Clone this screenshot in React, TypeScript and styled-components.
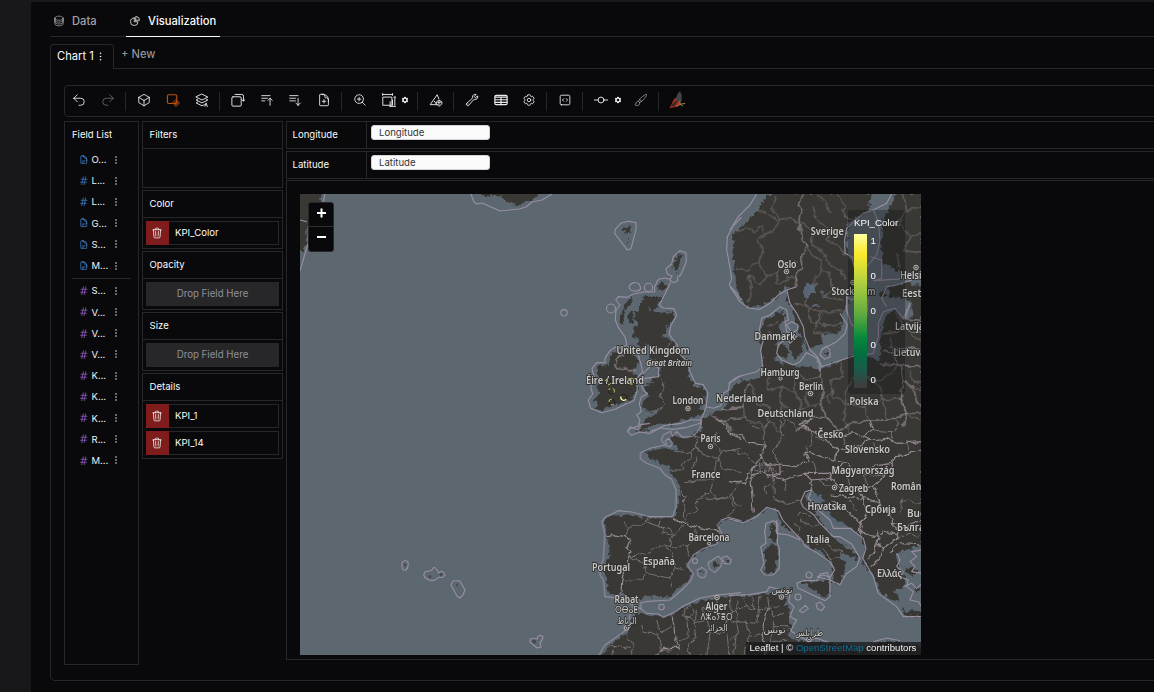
import React from "react";
import styled, { createGlobalStyle } from "styled-components";
import {
  HiOutlineCircleStack, HiOutlineChartPie, HiOutlineArrowUturnLeft, HiOutlineArrowUturnRight, HiOutlineCube,
  HiOutlineBarsArrowUp, HiOutlineBarsArrowDown,
  HiOutlineDocumentPlus, HiOutlineMagnifyingGlassPlus, HiOutlineWrench,
  HiOutlineCog6Tooth, HiCog6Tooth, HiOutlineCodeBracketSquare, HiOutlinePaintBrush, HiOutlineTrash,
  HiEllipsisVertical, HiOutlineDocumentText, HiOutlineHashtag,
} from "react-icons/hi2";

const line = "#27272a";

const Global = createGlobalStyle`
  * { box-sizing: border-box; }
  body { margin: 0; background: #18181b; overflow: hidden; font-family: Inter, "Liberation Sans", sans-serif; color: #fafafa; }
`;
const Page = styled.div`
  width: 1154px; height: 692px; padding: 2px 0 0 31px; overflow: hidden; background: #18181b;
`;
const Main = styled.main`
  height: 690px; background: #09090b; padding-left: 19px; overflow: hidden;
`;
const TabBar = styled.nav`
  display: flex; height: 35px; border-bottom: 1px solid ${line};
`;
const Tab = styled.div<{ $active?: boolean; $w: number }>`
  display: flex; align-items: center; gap: 7px; width: ${p => p.$w}px; height: 35px;
  padding: 4px 0 0 3px; font-size: 11.2px; font-weight: 500; white-space: nowrap;
  color: ${p => (p.$active ? "#fafafa" : "#a1a1aa")};
  border-bottom: 1px solid ${p => (p.$active ? "#fafafa" : "transparent")};
  svg { width: 12px; height: 12px; flex: none; }
`;
const ChartTabs = styled.div`
  display: flex; height: 25px; margin-top: 7px;
`;
const ChartTab = styled.div`
  display: flex; align-items: center; width: 64px; height: 25px; padding: 0 0 3px 6px; font-size: 11.2px;
  border: 1px solid ${line}; border-bottom: 0; border-radius: 4px 4px 0 0; white-space: nowrap;
  svg { width: 13px; height: 13px; margin-top: 2px; }
`;
const NewTab = styled.div`
  flex: 1; padding: 3px 0 0 7px; font-size: 11.2px; color: #a1a1aa; border-bottom: 1px solid ${line};
`;
const Panel = styled.section`
  width: 1150px; height: 612px; border: 1px solid ${line}; border-top: 0; border-bottom-left-radius: 5px;
  padding: 16px 0 0 13px;
`;
const Toolbar = styled.div`
  display: flex; align-items: center; width: 1120px; height: 32px; border: 1px solid ${line}; border-radius: 4px;
`;
const Tool = styled.div<{ $c?: string }>`
  display: flex; align-items: center; justify-content: center; flex: none; width: 28.8px; height: 30px;
  padding-bottom: 2px; color: ${p => p.$c ?? "#ececef"};
  svg { width: 14px; height: 14px; flex: none; }
`;
const MiniGear = styled(Tool)`
  justify-content: flex-start; width: 13px; margin-left: -2px;
  svg { width: 8px; height: 8px; }
`;
const Separator = styled.div`
  flex: none; width: 1px; height: 19px; background: ${line}; margin: 0 3.6px 0 2.6px;
`;
const Body = styled.div`
  display: flex; gap: 3px; margin-top: 4px;
`;
const FieldList = styled.aside`
  width: 75px; height: 544px; border: 1px solid ${line}; padding: 7px; font-size: 9.5px; flex: none;
`;
const Fields = styled.div`
  padding: 9px 0 1.6px; & + & { border-top: 1px solid ${line}; padding-top: 1.6px; }
`;
const FieldRow = styled.div<{ $dim: boolean }>`
  display: flex; align-items: center; height: 21.2px; padding-left: 7px; color: #f4f4f5;
  svg:first-child { color: ${p => (p.$dim ? "#4585d2" : "#9a66cf")}; width: 9.5px; height: 9.5px; margin-right: 3px; stroke-width: 1.8; }
  svg:last-child { width: 12px; height: 12px; }
  span { width: 18.8px; }
`;
const Shelves = styled.div`
  display: flex; flex-direction: column; gap: 2px; width: 141px; flex: none;
`;
const Shelf = styled.div`
  border: 1px solid ${line};
`;
const ShelfTitle = styled.div`
  height: 27px; line-height: 26px; padding-left: 6.5px; font-size: 9.6px; border-bottom: 1px solid ${line};
`;
const ShelfBody = styled.div<{ $empty?: boolean }>`
  display: flex; flex-direction: column; gap: 3px; padding: 3px; ${p => p.$empty && "height: 38px;"}
`;
const Pill = styled.div`
  display: flex; height: 24px; border: 1px solid ${line}; font-size: 9.6px; line-height: 21px;
`;
const Remove = styled.div`
  display: flex; align-items: center; justify-content: center; width: 23px; height: 24px; margin: -1px 6px 0 -1px; background: #7f1d1d;
  padding: 0 1px 1px 0; svg { width: 12px; height: 12px; }
`;
const Drop = styled.div`
  height: 24px; line-height: 24px; text-align: center; background: #27272a; color: #8f8f98; font-size: 9.7px;
`;
const Canvas = styled.div`
  display: flex; flex-direction: column; gap: 2px; width: 900px; flex: none;
`;
const Axis = styled.div`
  display: flex; height: 28px; border: 1px solid ${line}; font-size: 9.6px;
`;
const AxisName = styled.div`
  width: 80px; padding: 7px 0 0 5.5px; border-right: 1px solid ${line}; line-height: 11px;
`;
const AxisField = styled.div`
  width: 118.5px; height: 15px; margin: 3px 0 0 4px; padding-left: 7px; line-height: 13px; border: 1px solid #d4d4d8;
  border-radius: 3px; background: #fafafa; color: #333338;
`;
const ChartArea = styled.div`
  height: 480px; border: 1px solid ${line}; padding: 13px; margin-top: -1px;
`;
const MapFrame = styled.div`
  position: relative; width: 621px; height: 461px; overflow: hidden; background: #5d6770;
  > svg { display: block; }
`;
const ZoomControl = styled.div`
  position: absolute; left: 8px; top: 8px; width: 26px; height: 50px; border: 1px solid #27272a; border-radius: 3px;
  background: #09090b; overflow: hidden;
`;
const ZoomButton = styled.div`
  display: flex; align-items: center; justify-content: center; height: 23px; padding: 0 0 3px 1px;
  & + & { border-top: 1px solid #303033; height: 24px; }
`;
const Legend = styled.div`
  position: absolute; left: 548px; top: 16px; width: 57px; height: 184px; border-radius: 3px;
  background: rgba(10, 10, 14, 0.3); padding: 6px; font: 9.7px/13px "Liberation Sans", sans-serif; color: #fafafa;
`;
const LegendScale = styled.div`
  display: flex; gap: 3.5px; margin-top: 5px; height: 154px;
`;
const Ramp = styled.div`
  width: 13px;
  background: linear-gradient(#fdfea2 0%, #fbf04a 9%, #f8e82c 14%, #c8d83c 26%, #98c43f 38%, #5ca83f 53%, #078a3c 67%, #02703f 77%, #1c5a4c 88%, #3b3f3f 98%);
`;
const Ticks = styled.div`
  display: flex; flex-direction: column; justify-content: space-between; padding-bottom: 2px;
`;
const Attribution = styled.div`
  position: absolute; right: 0; bottom: 0; height: 13px; width: 175px; padding-left: 3.5px; background: rgba(24, 24, 27, 0.75);
  font: 9.6px/12px "Liberation Sans", sans-serif; white-space: nowrap; color: #f4f4f5;
  b { font-weight: 400; color: #0c7098; }
`;

const Svg = ({ children }: { children: React.ReactNode }) => (
  <svg viewBox="0 0 24 24" fill="none" stroke="currentColor" strokeWidth="1.6" strokeLinecap="round" strokeLinejoin="round">{children}</svg>
);

// Map geometry is kept as four tiles of 3x units, joined in one drawing.
const NW = "translate(550 190) scale(.33333)";
const NE = "translate(730 190) scale(.33333)";
const SW = "translate(550 420) scale(.33333)";
const SE = "translate(730 420) scale(.33333)";

const land: [string, string[]][] = [
  [NW, [
    "280,318 334,318 325,340 308,362 325,368 368,365 370,380 358,405 342,432 335,442 352,445 388,475 403,505 418,560 432,590 457,590 468,610 464,640 447,655 464,664 442,682 402,688 370,700 320,702 300,714 262,726 285,692 320,672 340,660 310,662 275,655 272,640 295,622 285,600 285,588 310,580 305,560 332,560 332,520 300,500 310,480 290,455 275,478 264,465 270,440 248,425 262,405 252,380 270,350",
    "222,345 245,322 245,345 225,358", "232,370 250,366 252,392 236,400", "215,360 222,362 218,400 212,400", "322,290 334,276 348,290 336,306",
    "370,218 388,192 395,196 390,215 380,244 374,240", "215,115 242,108 240,124 226,134", "230,145 236,148 235,165", "248,430 256,432 254,445 246,442",
    "190,485 215,480 240,490 262,505 265,525 248,545 262,570 258,600 245,630 215,640 185,648 150,660 130,655 145,640 130,628 150,610 140,590 155,570 140,545 145,525 175,530 180,510",
    "574,566 560,590 552,625 540,640 515,660 480,670 462,692 458,724 574,724", "552,125 574,115 574,290 560,270 548,200",
  ]],
  [NE, [
    "90,50 110,20 140,10 425,10 415,60 390,75 355,100 350,190 375,220 402,250 375,290 350,315 355,340 340,370 335,410 325,430 300,430 275,440 268,470 235,478 225,450 205,420 195,380 170,330 178,290 165,285 150,310 120,335 80,352 45,345 20,300 15,240 10,150 30,120 60,85",
    "500,10 575,10 575,240 540,250 495,238 460,220 455,160 460,90 475,60",
    "475,292 530,280 576,290 576,724 -4,724 -4,610 20,580 70,570 100,552 100,520 95,480 92,430 105,390 150,368 165,360 160,395 145,405 155,430 135,460 150,495 130,510 175,525 230,530 265,540 330,514 370,497 415,502 445,512 455,500 455,470 450,440 462,400 470,370 500,362 520,392 545,385 545,335 520,325 480,320",
    "138,468 170,466 174,502 150,504", "178,440 218,440 217,480 195,510 178,482", "283,484 296,486 290,498", "390,335 402,320 400,350 388,370", "455,300 470,300 466,318 448,316",
  ]],
  [SW, [
    "458,-6 460,25 430,40 420,55 385,50 365,45 370,70 385,95 345,85 290,95 300,115 330,130 360,140 365,165 385,180 390,210 400,230 385,225 380,285 370,298 300,294 205,285 170,295 165,315 175,350 178,400 170,440 158,455 175,470 172,520 205,520 225,515 235,535 255,545 275,530 320,528 360,530 385,500 415,480 425,460 410,440 425,410 470,385 500,370 505,345 500,335 515,305 545,292 574,300 574,-6",
    "262,30 285,4 300,-10 340,-10 400,-8 350,4 300,14 280,26",
    "150,708 180,675 230,640 245,600 260,582 285,582 330,592 370,585 400,562 450,545 500,535 574,524 574,708",
    "485,433 500,423 508,432 492,444", "524,418 538,422 530,426", "450,455 457,450 458,460",
  ]],
  [SE, [
    "-4,-6 -4,297 35,308 60,300 85,280 125,260 140,270 150,300 165,325 205,350 245,385 270,390 300,425 310,440 312,470 305,492 325,492 345,460 345,430 330,410 345,400 380,420 385,408 350,380 320,360 305,345 275,310 255,280 240,255 225,225 245,212 265,225 280,250 300,290 340,310 390,345 405,385 400,430 425,460 440,488 450,515 480,535 505,545 495,510 530,490 505,445 500,400 576,375 576,-6",
    "216,486 250,485 300,480 294,534 260,517", "105,380 138,375 143,410 135,455 107,460", "118,322 137,314 138,360 124,368",
    "520,571 576,578 576,592 522,584",
    "-4,528 55,528 110,522 150,522 168,530 162,555 182,570 172,600 186,620 170,645 200,662 235,670 300,672 340,672 400,690 440,668 500,668 576,680 576,710 -4,710",
    "524,440 560,450 550,470 530,456", "558,500 572,510 560,518",
  ]],
];

const seas: [string, string[]][] = [
  [NE, ["218,292 240,280 262,284 256,302 232,325 222,318", "244,340 268,345 262,352 246,350", "275,300 282,300 280,325 274,330", "330,405 348,345 350,350 340,400"]],
  [NW, ["290,355 305,352 300,362"]],
  [SE, ["248,222 270,224 284,246 274,250 262,240 256,252", "290,270 330,305 350,320 320,318 296,295", "100,150 112,146 116,150 108,156"]],
];

const maritime: [string, string[]][] = [
  [NW, [
    "212,100 235,94 258,98 258,118 243,176 232,180 194,130 196,118Z",
    "390,182 408,188 409,215 392,255 382,262 384,272 370,278 360,270 366,258 352,252 348,236 365,222 370,200Z",
    "360,268 345,264 325,268 314,290 314,306 280,306 250,312 232,322 205,320 197,330 210,345 198,360 196,390 205,412 226,442 230,465 215,472 195,472 180,482 165,505 165,518 140,518 126,535 132,560 122,590 128,612 115,630 122,655 155,668 195,658 228,642 252,632 262,600 260,565 278,545 272,520 264,492 232,470",
    "362,276 345,312 328,345 340,354 372,356 380,376 362,408 358,434 382,465 382,485 412,515 420,545 436,580 460,584 474,610 468,650 490,655 510,648 522,630 520,610 536,600 538,580 555,565 574,558",
    "468,650 458,680 450,690 420,690 395,700 345,706 320,718 300,724", "234,724 240,716 265,708 270,690 260,675 274,665 268,640 274,620 292,612 280,600 274,585 285,565 325,560 326,535 308,522 285,545 278,550",
    "574,82 548,110 532,140 530,180 536,210 545,265 538,285 560,310 574,330",
  ]],
  [NE, [
    "0,120 25,80 60,45 80,12", "0,290 14,310 30,335 55,354 90,358 120,340 145,315 170,300 200,290",
    "170,300 180,340 200,370 220,410 224,440 240,480 262,500 275,530 320,515 370,498", "270,545 270,520 262,505 230,488 210,515 190,525 155,510 140,490 145,465 170,445 180,460 200,440 170,425 165,395 175,390 170,360 150,350 120,375 95,385 88,420 100,450 92,480 98,530 80,545 30,558 -4,580",
    "170,405 185,395 204,405 202,420 185,428Z", "275,480 290,468 300,480 300,500 285,508 270,495Z", "485,12 470,40 430,60 400,70 350,115 344,150 345,190 375,205", "430,60 445,95 450,150 440,195 410,230 375,240 365,200",
    "420,200 455,210 455,265 430,272 540,265 575,258", "350,320 350,360 365,405 390,415 410,380 415,330 390,310 365,330Z", "320,455 345,430 352,405 330,370", "320,455 275,478", "370,498 430,490 445,440 445,400 460,365 495,355 520,385 540,345",
    "545,270 500,285 470,290 455,325 470,350",
  ]],
  [SW, [
    "300,10 270,14 265,30 240,20 232,34 244,46 270,36 300,40 330,24 370,28 410,22 450,10 454,-4", "362,34 368,48 380,34 398,52 430,48 450,24 455,0", "362,34 340,44 334,60 345,75 300,85 272,98 270,115 290,130 330,145 345,165 365,178 378,210 378,260 368,290 300,290 245,276 205,272 165,292 156,304 164,345 160,420 148,440 150,465 160,480 165,530 215,535 250,556 275,568",
    "346,62 356,55 368,70 360,80 350,78Z", "285,545 360,540 395,510 420,485 430,462 412,435 430,405 455,388 500,372 515,340 502,315 515,300 535,292 574,302",
    "290,580 272,565 272,548 285,545", "290,580 325,582 340,592 375,575 400,558 450,534 500,525 574,518", "145,708 165,675 215,640 240,620 238,590 250,556",
    "474,428 505,408 516,422 512,440 494,458 478,446Z", "516,412 530,408 544,420 538,432 522,430Z", "442,450 456,442 470,452 466,470 455,474 444,466Z",
  ]],
  [SE, [
    "-4,296 40,308 80,290 110,262 145,272 158,300 190,335 215,360 225,378 255,395 300,425 314,450 300,472 280,465 262,470 300,480",
    "108,310 130,302 144,312 142,370 148,385 148,445 130,465 105,465 92,450 102,430 92,380 108,370 104,335Z", "140,300 140,340 175,345 210,360",
    "300,480 300,530 285,542 205,505 200,490 220,482 262,482 270,462 292,458 300,480 330,494 348,462 380,440 390,415 365,372 330,350 310,350 268,308 252,285 220,262 212,245 225,215 245,210 235,235 270,275 300,300 310,325 360,325 400,355 408,385 398,415 430,470 445,520 500,560 520,590 576,590",
    "-4,526 60,524 110,515 118,500 155,510 180,525 176,545 192,560 180,590 200,600 182,632 210,650 230,660 260,655 300,668", "258,552 270,546 284,560 275,572 262,566Z", "208,572 226,556 235,565 218,578Z", "430,665 470,654 510,662",
    "500,400 510,420 500,440 520,455 510,470 535,480 530,500 550,515 540,540 565,545 575,560", "576,390 545,395 560,410 540,425 555,440 545,455 576,460", "520,500 545,490 560,505 576,490",
  ]],
];

const borders: [string, string[]][] = [
  [NW, ["350,470 365,458", "335,570 342,590 330,620 343,640 330,660 300,665"]],
  [NE, [
    "15,125 55,115 75,125 90,110 110,130 80,150 100,180 85,215 60,240 20,235", "80,60 110,70 140,90 170,85 200,90 212,110", "110,130 130,125 150,90 125,55 140,15", "85,215 110,260 90,285 55,255 65,300 55,340", "110,260 145,245 140,280 170,275 175,258 198,265 195,290", "145,245 150,215 200,220",
    "212,100 250,120 245,160 280,185 300,225 335,240 345,270", "250,50 260,90 300,120 290,150 330,170 345,200", "228,165 250,200 275,215 275,240 250,270 245,300", "275,240 300,250 305,300 285,320 340,330", "245,300 225,335 235,360 290,370 340,360", "235,360 240,400 300,405 335,400", "270,370 265,400 250,430 300,430", "190,340 230,345", "320,12 345,50 340,80 375,90", "260,12 285,35 300,70", "108,410 145,395", "110,430 150,440",
    "520,15 530,60 505,100 540,140 520,180 575,190", "530,60 575,50", "540,140 575,130", "500,190 510,235", "480,440 490,490", "500,365 520,410",
    "120,545 115,600 155,590 200,610 190,540", "155,590 150,640 190,665 240,650 275,640", "60,580 70,600 80,640 120,650 115,690 145,724", "40,650 45,690 90,700 100,724", "0,685 45,680", "200,610 215,640 200,680", "190,540 230,570 270,560",
    "330,515 340,560 300,570 310,620 350,640 340,690 360,724", "370,500 380,550 440,575 490,545 500,525", "380,550 350,600 350,640 400,650 420,690", "440,575 460,630 510,625", "400,650 440,640 460,630", "150,640 165,690 150,724", "240,650 225,625 235,590", "300,640 290,625 310,600", "460,630 470,690", "545,590 576,600", "540,540 550,580 576,570", "535,680 576,690", "540,420 545,440 576,450", "480,470 510,475",
  ]],
  [SW, [
    "380,95 420,98 440,75 435,45 455,30", "420,98 425,115 400,130 400,150 365,150", "435,45 495,70 515,95 500,115 455,105 440,75", "500,115 490,180 440,180 400,185", "500,30 500,70", "515,95 574,85", "500,115 520,145 574,155", "490,180 480,215 500,240 540,225 574,180", "480,215 440,240 440,265 410,290", "440,235 540,235 574,260", "405,225 400,290 415,310", "540,225 555,265 530,290", "440,180 425,150 440,110", "385,210 402,228",
    "225,300 235,325 290,305 300,295", "235,325 225,350 245,360", "330,300 325,320 360,325 370,345 400,315", "290,305 340,325 335,340 370,345", "370,345 360,380 410,380 440,345 435,320", "345,375 325,375 300,395 240,410", "345,375 365,400 375,440 400,450", "240,410 280,430 290,460 275,480 225,485", "290,460 360,475 375,440", "360,475 365,500", "410,380 420,410", "360,380 345,375",
    "275,610 280,640 320,640 335,690 365,690", "230,645 250,680 240,708", "320,600 330,640 365,620", "410,590 415,650 385,660", "440,570 435,610 470,600 460,560", "470,600 480,640 520,640 530,600 574,610", "410,560 400,590 440,600", "435,610 440,650 415,680 420,708", "540,530 545,580 520,600", "480,640 470,708", "530,640 540,708", "180,678 240,685", "190,690 185,708", "420,555 430,580 410,600", "500,540 505,565 480,575 460,560",
  ]],
  [SE, [
    "110,130 105,165", "125,170 130,180", "110,225 105,200 130,180", "120,130 130,175 160,150", "85,130 90,165", "75,150 100,160 125,145 140,160", "80,140 100,130 140,150", "135,240 170,250 215,240", "200,290 215,270 240,290", "165,210 170,185 150,170", "150,0 160,50 130,90 150,135", "105,75 100,30 120,0", "190,310 210,320 205,345", "210,300 250,320 280,310", "245,355 265,370 290,350", "290,370 310,390 335,390 330,410", "275,385 305,420 330,410", "130,180 135,240",
    "250,120 260,160", "270,185 300,200", "245,30 240,80 225,95", "260,50 300,70 325,85", "340,45 345,75", "430,30 480,35 490,60", "480,35 510,15 500,-4", "350,150 360,200", "400,145 410,200", "360,240 380,270", "395,315 395,345", "520,225 510,280", "430,70 440,100", "370,150 430,170 480,160", "520,240 560,250 576,245", "530,60 540,95", "170,-4 200,20 245,30", "60,10 90,30", "0,90 40,100 75,130", "505,355 540,340 560,350 576,335",
    "50,560 85,570 80,610 20,605 25,640 0,660", "90,528 85,570 120,565 130,590 162,580", "115,525 120,565", "45,600 60,650 40,708", "130,590 130,620 172,620", "130,620 120,670 170,660", "20,545 25,605", "65,530 70,570", "130,560 150,560", "40,530 50,560 0,575", "20,640 10,708", "60,650 95,640",
  ]],
];

const nations: [string, string[]][] = [
  [NW, ["222,490 202,505 195,525 205,540 225,530 240,545 258,540", "480,672 505,692 520,690 545,724", "515,660 574,655", "505,692 574,686"]],
  [NE, [
    "220,12 208,45 215,65 207,100 212,130 228,165 215,200 220,235 200,245 200,290", "262,505 272,560 280,610 270,640 290,680 330,724", "290,680 250,680 225,700 200,724",
    "60,580 45,600 40,650 0,655", "420,690 470,690 530,670 520,710", "530,670 510,625 520,575 515,530 490,525 450,520", "455,430 500,430 520,415 575,430", "460,480 490,490 520,470 575,480", "490,490 500,525 575,530", "540,340 525,385 575,395", "510,625 530,670 575,670", "330,724 360,700 420,690", "520,575 550,590 560,640 575,650",
  ]],
  [SW, ["500,-4 525,15 545,45 574,55", "372,298 385,305 430,320 460,325 505,335", "170,350 200,345 225,350 240,360 230,385 240,395 225,450 215,490 212,520", "370,590 375,620 378,660 388,685 340,685 325,708"]],
  [SE, [
    "0,40 40,45 60,70 105,75 90,115 75,135 55,160 45,190 0,185", "90,115 110,130 150,135 150,160 120,170 95,155 70,165 65,145 80,135", "150,135 200,140 235,120 225,95 275,110 310,120 325,90 280,50 240,30 210,10 250,-4", "75,135 60,185 65,220 70,280", "125,170 165,180 220,160 245,180 240,210",
    "325,90 370,80 420,60 470,55 500,70 576,65", "310,120 345,125 375,150 480,130 500,110 540,100 576,90", "345,125 310,150 305,175 330,200 380,205 430,200 475,150 500,110", "220,160 300,160 305,175 245,180", "300,225 350,230 400,235 410,280 390,310 340,260 305,245", "380,205 395,230 450,250 440,220 430,200", "450,250 480,280 490,310 530,320 576,300", "410,280 385,325 410,345 440,350 445,330", "490,310 505,355 460,385 440,370 445,345 470,335 500,345", "505,370 576,375", "440,370 430,400 410,415", "460,385 450,420 425,440", "505,370 480,400", "280,50 320,30 340,45 370,35 400,50 420,60", "400,50 430,30 420,0",
    "115,565 105,600 95,640 110,690 105,708",
  ]],
];

type Label = [string, number, number, number?, ("start" | "middle")?, boolean?];
const labels: Label[] = [
  ["Sverige", 827.3, 235, 33], ["Oslo", 787, 268, 19], ["Stockholm", 853.5, 295, 44], ["Helsinki", 900, 279, 35, "start"],
  ["Eesti", 902, 297, 22, "start"], ["Latvija", 895, 329.5, 29, "start"], ["Lietuva", 893.5, 356, 32, "start"],
  ["Danmark", 775, 339.5, 41], ["Hamburg", 780, 375.5, 39], ["Berlin", 811, 389.5, 24], ["Polska", 864, 404.5, 29],
  ["Deutschland", 785.5, 417, 56], ["Nederland", 739.5, 401.5, 47], ["London", 688, 404, 31], ["United Kingdom", 653, 353.5, 73],
  ["Great Britain", 669, 366, 46, "middle", true], ["Éire / Ireland", 615, 384, 58], ["Paris", 710.5, 442, 20], ["France", 706, 477.5, 29],
  ["Česko", 830.5, 438, 26], ["Slovensko", 867.5, 453, 45], ["Magyarország", 863, 473.5, 63], ["Zagreb", 853.5, 491.5, 29],
  ["România", 891, 489.5, 38, "start"], ["Hrvatska", 827, 509.5, 39], ["Србија", 880.5, 513, 31], ["București", 907, 517, 46, "start"],
  ["България", 897, 531, 45, "start"], ["Italia", 818, 543, 23], ["Ελλάς", 889.5, 577, 25], ["Barcelona", 709, 540.5, 41],
  ["España", 659, 564.5, 32], ["Portugal", 611, 570.5, 38], ["Rabat", 626.5, 602.5, 24], ["Alger", 716.5, 609.5, 22],
];
// Tifinagh and Arabic names: a lighter weight and fixed widths.
const scripts: [string, number, number, number][] = [
  ["ⵔⴱⴰⵟ", 626.5, 613, 23], ["الرباط", 627, 623.5, 19], ["ⴷⵣⴰⵢⴻⵔ", 716.5, 620, 32], ["الجزائر", 717, 630.5, 21],
  ["تونس", 782, 593, 21], ["تونس", 774.5, 633, 22], ["طرابلس", 809, 636, 28],
];
const cities = [[786.5, 271.5], [916, 267.5], [810.5, 393.5], [688, 408.5], [710.5, 446.5], [834.5, 487.5], [717, 597.5], [626.5, 628], [781.5, 597], [809, 639.5], [853, 282.5], [780.5, 378.5, 1], [709, 543.5, 1]];
const isles = [[564, 312.8, 3.2], [611, 308.5, 4.5], [648.5, 287.5, 4.2], [695, 561, 2.5], [661.5, 607, 2.8], [798, 597, 3], [809, 575, 3]];
const points: [number, number, string][] = [
  [607.8, 382, "M-2.800-1A3 3 0 0 1 0-3M2.800 1A3 3 0 0 1 0 3"],
  [631.8, 381.2, "M-3 0A3 3 0 0 1 1-2.800M-2.500 1.800A3 3 0 0 0 1 2.800"],
  [611.5, 391, "M1-2.800A3 3 0 0 1 2.500 1.600M-2.800-1A3 3 0 0 1-1-2.800"],
  [623.8, 397.4, "M-2.800-1A3 3 0 0 0 2.400 1.800"],
  [611.8, 402, "M-3 0A3 3 0 0 1 0-3M2 2.200A3 3 0 0 1-1 2.800"],
];

const outlines = (groups: [string, string[]][], fill: string, stroke: string, w: number) =>
  groups.map(([t, list], i) => (
    <g key={i} transform={t} fill={fill} stroke={stroke} strokeWidth={w * 3} strokeLinejoin="round">
      {list.map((d, j) => <path key={j} d={`M${d}`} />)}
    </g>
  ));

const EuropeMap = () => (
  <svg width="621" height="461" viewBox="300 194 621 461">
    <defs>
      <filter id="coast" x="-2%" y="-2%" width="104%" height="104%" colorInterpolationFilters="sRGB">
        <feTurbulence type="fractalNoise" baseFrequency="0.2" numOctaves="3" seed="8" />
        <feDisplacementMap in="SourceGraphic" scale="8" xChannelSelector="R" yChannelSelector="G" />
      </filter>
      <filter id="wiggle" x="-2%" y="-2%" width="104%" height="104%" colorInterpolationFilters="sRGB">
        <feTurbulence type="fractalNoise" baseFrequency="0.14" numOctaves="2" seed="3" />
        <feDisplacementMap in="SourceGraphic" scale="6" xChannelSelector="R" yChannelSelector="G" />
      </filter>
    </defs>
    <rect x="300" y="194" width="621" height="461" fill="#5d6770" />
    <g filter="url(#coast)">
      {outlines(land, "#393835", "#4f5c68", 0.7)}
      {outlines(land, "#393835", "none", 0)}
      {outlines(seas, "#566473", "none", 0)}
      <path fill="#393835" d="M296 190H324L318 203 312 212 311 224 306 230 307 242 303 250H296Z M482 190H540L534 198 526 202 520 205 512 204 505 200 498 196 484 196Z" />
    </g>
    <g filter="url(#wiggle)">
      {outlines(borders, "none", "#7d7678", 0.9)}
      {outlines(nations, "none", "#978b94", 1.15)}
    </g>
    {outlines(maritime, "none", "#9890a2", 1.1)}
    <g fill="none" stroke="#9890a2" strokeWidth="1.1" strokeLinejoin="round">
      <path d="M471 194L474 202 477 204 482 203 500 211 519 209 526 207 532 202 542 200 552 194 M325 194 322 206 307 247 300 271 M300 220 304 221 307 222" />
      <path d="M629 286.500Q633 280 639 284Q643 290 637 291Q630 292 629 286.500Z M402 563Q404 559 408 562Q409 567 406 570Q402 571 402 566Z M425 572Q430 571 432 570Q434 565 437 570L439 573Q443 569 445 575Q443 579 439 577Q434 583 427 579Q422 576 425 572Z M453 581H460L465 590 463 595 460 598 457 596 451 585Z M530 639Q533 638 537 639Q539 633 543 637Q542 641 540 643L541 647 537 648 530 642Z" />
      {isles.map(([x, y, r], i) => <circle key={i} cx={x} cy={y} r={r} />)}
    </g>
    <g fill="#4a484a"><circle cx="430" cy="576.500" r="1.500" /><circle cx="441" cy="574.500" r="1.500" /><circle cx="457" cy="585" r="1.200" /><circle cx="405" cy="565" r="1.200" /><circle cx="534" cy="641.500" r="2" /></g>
    {cities.map(([x, y, small], i) => (
      <g key={i} fill="none" stroke="#c4c1bf">
        <circle cx={x} cy={y} r={small ? 1.6 : 2.3} fill="#4a4947" strokeWidth="0.9" />
        {!small && <circle cx={x} cy={y} r=".8" fill="#d0cecb" stroke="none" />}
      </g>
    ))}
    <g fontFamily='"Noto Sans", "DejaVu Sans", sans-serif' fontWeight="600" fill="#cbc9c8" stroke="#30302f" strokeWidth="1.8" strokeLinejoin="round" paintOrder="stroke">
      {labels.map(([t, x, y, w, a, it], i) => (
        <text key={i} x={x} y={y} fontSize={it ? 8 : 9.9} textAnchor={a ?? "middle"} fontStyle={it ? "italic" : "normal"}
          textLength={w || undefined} lengthAdjust="spacingAndGlyphs">{t}</text>
      ))}
      {scripts.map(([t, x, y, w], i) => (
        <text key={i} x={x} y={y} fontSize="9.500" fontWeight="500" textAnchor="middle" textLength={w} lengthAdjust="spacingAndGlyphs">{t}</text>
      ))}
    </g>
    {points.map(([x, y, d], i) => (
      <g key={i} fill="none" strokeWidth="1" transform={`translate(${x} ${y})`}>
        <circle r="3" stroke="#24241c" />
        <path d={d} stroke={i === 3 ? "#fffba8" : "#d2cf6a"} strokeWidth={i === 3 ? 1.3 : 1} />
      </g>
    ))}
  </svg>
);

const FieldGroup = ({ items, dim }: { items: string[]; dim: boolean }) => (
  <Fields>
    {items.map((n, i) => (
      <FieldRow key={i} $dim={dim}>
        {n.endsWith("#") || !dim ? <HiOutlineHashtag /> : <HiOutlineDocumentText />}
        <span>{n.replace("#", "")}...</span><HiEllipsisVertical />
      </FieldRow>
    ))}
  </Fields>
);
const Encoded = ({ name }: { name: string }) => (
  <Pill><Remove><HiOutlineTrash /></Remove>{name}</Pill>
);

export default function App() {
  return (
    <Page>
      <Global />
      <Main>
        <TabBar>
          <Tab $w={76}><HiOutlineCircleStack />Data</Tab>
          <Tab $active $w={94}><HiOutlineChartPie />Visualization</Tab>
        </TabBar>
        <ChartTabs>
          <ChartTab>Chart 1<HiEllipsisVertical /></ChartTab>
          <NewTab>+ New</NewTab>
        </ChartTabs>
        <Panel>
          <Toolbar>
            <Tool><HiOutlineArrowUturnLeft /></Tool>
            <Tool $c="#66666b"><HiOutlineArrowUturnRight /></Tool>
            <Separator />
            <Tool><HiOutlineCube /></Tool>
            <Tool $c="#c2500c"><Svg><rect x="2.500" y="3" width="16" height="15" rx="2.500" strokeWidth="2" /><path d="M17 12l6 5-6 6-5-6z" /><path d="M15 17h5M17 15v5" /></Svg></Tool>
            <Tool><Svg><path d="M12 2l10 5-10 5L2 7zM4.500 10.500L2 12l10 5 10-5-2.500-1.500M4.500 15.500L2 17l10 5 4-2M17 23l2-6 2 6" /></Svg></Tool>
            <Separator />
            <Tool><Svg><rect x="1.500" y="6.500" width="16" height="16" rx="2" /><path d="M7 2.500h11.500a3 3 0 0 1 3 3V13M18.500 11.500l3 2.500 2-2.500" /></Svg></Tool>
            <Tool><HiOutlineBarsArrowUp /></Tool>
            <Tool><HiOutlineBarsArrowDown /></Tool>
            <Tool><HiOutlineDocumentPlus /></Tool>
            <Separator />
            <Tool><HiOutlineMagnifyingGlassPlus /></Tool>
            <Tool><Svg><path d="M1 1v3M1 2.500h17M18 1v3M2 7h15v14H2zM22 7v14M20.500 7h3M14 15v6M18 12v9M13 23h10" /></Svg></Tool>
            <MiniGear><HiCog6Tooth /></MiniGear>
            <Separator />
            <Tool><Svg><path d="M14 20H2L14 3l3 7M9 14l4 5" /><path d="M13 15l4-3 5 3v4l-5 4-4-4z M15 16h5M17 14v6" /></Svg></Tool>
            <Separator />
            <Tool><HiOutlineWrench /></Tool>
            <Tool><Svg><rect x="1.500" y="4" width="21" height="16" rx="2" strokeWidth="2" /><path strokeWidth="2" d="M2 7h20M2 11.500h20M2 16h20M12 7v13" /></Svg></Tool>
            <Tool><HiOutlineCog6Tooth /></Tool>
            <Separator />
            <Tool><HiOutlineCodeBracketSquare /></Tool>
            <Separator />
            <Tool><Svg><circle cx="12" cy="12" r="5" /><path d="M0 12h7M17 12h7" /></Svg></Tool>
            <MiniGear><HiCog6Tooth /></MiniGear>
            <Tool $c="#909095"><HiOutlinePaintBrush /></Tool>
            <Separator />
            <Tool>
              <svg viewBox="0 0 24 24" overflow="visible"><path fill="#434446" d="M14 0l3-3 3 6v10l-6 7-9 1 4-10z" /><path fill="#a72d1d" d="M6 12l3-4 4 6 5 3-5 6-14 3z" /><path fill="#2c2d2f" d="M1 22l10-9 2 1-6 9z" /><path fill="none" stroke="#a98c50" strokeWidth="1.600" d="M11 23l7-4 8-1M17 14v5l5 3" /></svg>
            </Tool>
          </Toolbar>
          <Body>
            <FieldList>
              Field List
              <FieldGroup dim items={["O", "L#", "L#", "G", "S", "M"]} />
              <FieldGroup dim={false} items={["S", "V", "V", "V", "K", "K", "K", "R", "M"]} />
            </FieldList>
            <Shelves>
              <Shelf><ShelfTitle>Filters</ShelfTitle><ShelfBody $empty /></Shelf>
              <Shelf><ShelfTitle>Color</ShelfTitle><ShelfBody><Encoded name="KPI_Color" /></ShelfBody></Shelf>
              <Shelf><ShelfTitle>Opacity</ShelfTitle><ShelfBody><Drop>Drop Field Here</Drop></ShelfBody></Shelf>
              <Shelf><ShelfTitle>Size</ShelfTitle><ShelfBody><Drop>Drop Field Here</Drop></ShelfBody></Shelf>
              <Shelf><ShelfTitle>Details</ShelfTitle><ShelfBody><Encoded name="KPI_1" /><Encoded name="KPI_14" /></ShelfBody></Shelf>
            </Shelves>
            <Canvas>
              <Axis><AxisName>Longitude</AxisName><AxisField>Longitude</AxisField></Axis>
              <Axis><AxisName>Latitude</AxisName><AxisField>Latitude</AxisField></Axis>
              <ChartArea>
                <MapFrame>
                  <EuropeMap />
                  <ZoomControl>
                    <ZoomButton><svg width="9" height="10" stroke="#fff" strokeWidth="2"><path d="M0 5h9M4.500 0.500v9" /></svg></ZoomButton>
                    <ZoomButton><svg width="9" height="10" stroke="#fff" strokeWidth="2"><path d="M0 5h9" /></svg></ZoomButton>
                  </ZoomControl>
                  <Legend>
                    KPI_Color
                    <LegendScale>
                      <Ramp />
                      <Ticks><span>1</span><span>0</span><span>0</span><span>0</span><span>0</span></Ticks>
                    </LegendScale>
                  </Legend>
                  <Attribution>Leaflet | © <b>OpenStreetMap</b> contributors</Attribution>
                </MapFrame>
              </ChartArea>
            </Canvas>
          </Body>
        </Panel>
      </Main>
    </Page>
  );
}
